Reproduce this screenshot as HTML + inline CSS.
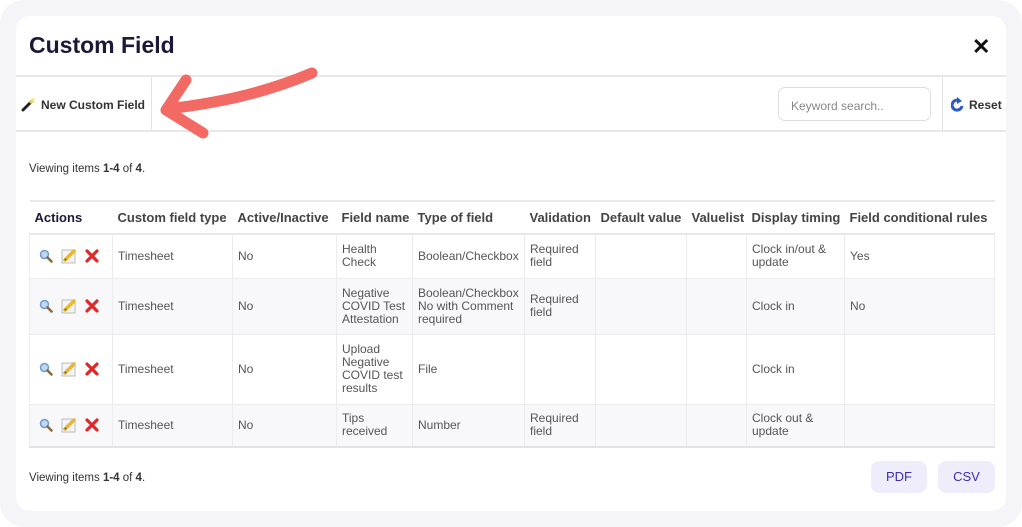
<!DOCTYPE html>
<html><head><meta charset="utf-8"><style>
*{box-sizing:border-box;margin:0;padding:0}
body{width:1022px;height:527px;background:#fff;font-family:"Liberation Sans",sans-serif;overflow:hidden;position:relative}
.outer{position:absolute;left:0;top:0;width:1022px;height:527px;background:#f5f5f9;border-radius:24px}
.card{position:absolute;left:16px;top:16px;width:990px;height:495px;background:#fff;border-radius:14px;overflow:hidden}
h1{position:absolute;left:13px;top:16px;font-size:23px;font-weight:bold;color:#1c1838}
.close{position:absolute;left:956px;top:18px;font-size:22px;font-weight:bold;color:#111}
.bar{position:absolute;left:0;top:59px;width:990px;height:57px;border-top:2px solid #e8e8ec;border-bottom:2px solid #e8e8ec}
.ncf{position:absolute;left:5px;top:20px;font-size:12px;font-weight:bold;color:#333;display:flex;align-items:center;gap:5px}
.v1{position:absolute;left:135px;top:0;height:53px;border-left:1px solid #e3e3e3}
.v2{position:absolute;left:926px;top:0;height:53px;border-left:1px solid #e3e3e3}
.search{position:absolute;left:762px;top:10px;width:153px;height:34px;border:1px solid #ddd;border-radius:7px;font-size:12px;color:#888;padding:11px 12px}
.reset{position:absolute;left:935px;top:20px;font-size:12px;font-weight:bold;color:#333;display:flex;align-items:center;gap:4px}
.view{position:absolute;left:13px;font-size:11.5px;color:#333}
table{position:absolute;left:13px;top:184px;border-collapse:collapse;font-size:12px;color:#555;border-top:2px solid #e8e8ec;border-bottom:2px solid #e3e3e6}
th{font-size:13px;color:#444;text-align:left;height:33px;padding:0 2px 0 5px;white-space:nowrap;border-bottom:2px solid #e8e8ec}
th:first-child{color:#1c1838}
td{border:1px solid #ececee;padding:0 5px;vertical-align:middle;line-height:13px}
td.a{padding-left:9px;white-space:nowrap}
tr.s td{background:#f8f8fb}
.btn{position:absolute;top:445px;height:32px;width:56px;background:#efedfb;border-radius:8px;color:#3a2fb0;font-size:13px;text-align:center;line-height:32px}
.ic{display:inline-block;vertical-align:middle;margin-right:8px}
</style></head><body>
<div class="outer"></div>
<div class="card">
<h1>Custom Field</h1>
<div class="close">✕</div>
<div class="bar">
<div class="ncf"><svg width="15" height="15" viewBox="0 0 15 15"><path d="M2 13 L11 4" stroke="#222" stroke-width="3" stroke-linecap="round"/><path d="M10 5 L12 3" stroke="#f0d050" stroke-width="3" stroke-linecap="round"/><circle cx="12" cy="2.5" r="1.5" fill="#ffe680"/></svg>New Custom Field</div>
<div class="v1"></div>
<div class="search">Keyword search..</div>
<div class="v2"></div>
<div class="reset"><svg width="14" height="15" viewBox="0 0 14 15"><path d="M11 9 A5 5 0 1 1 8 3.5" stroke="#2a5bc8" stroke-width="3" fill="none"/><path d="M6 0 L11 4 L6 7 Z" fill="#2a5bc8"/></svg>Reset</div>
</div>
<div class="view" style="top:147px">Viewing items <b>1-4</b> of <b>4</b>.</div>
<table>
<tr><th style="width:82px">Actions</th><th style="width:120px">Custom field type</th><th style="width:104px">Active/Inactive</th><th style="width:76px">Field name</th><th style="width:112px">Type of field</th><th style="width:71px">Validation</th><th style="width:91px">Default value</th><th style="width:60px">Valuelist</th><th style="width:98px">Display timing</th><th style="width:150px">Field conditional rules</th></tr>
<tr style="height:44px"><td class="a">ICONS</td><td>Timesheet</td><td>No</td><td>Health<br>Check</td><td>Boolean/Checkbox</td><td>Required<br>field</td><td></td><td></td><td>Clock in/out &amp;<br>update</td><td>Yes</td></tr>
<tr class="s" style="height:56px"><td class="a">ICONS</td><td>Timesheet</td><td>No</td><td>Negative<br>COVID Test<br>Attestation</td><td>Boolean/Checkbox<br>No with Comment<br>required</td><td>Required<br>field</td><td></td><td></td><td>Clock in</td><td>No</td></tr>
<tr style="height:70px"><td class="a">ICONS</td><td>Timesheet</td><td>No</td><td>Upload<br>Negative<br>COVID test<br>results</td><td>File</td><td></td><td></td><td></td><td>Clock in</td><td></td></tr>
<tr class="s" style="height:43px"><td class="a">ICONS</td><td>Timesheet</td><td>No</td><td>Tips<br>received</td><td>Number</td><td>Required<br>field</td><td></td><td></td><td>Clock out &amp;<br>update</td><td></td></tr>
</table>
<div class="view" style="top:456px">Viewing items <b>1-4</b> of <b>4</b>.</div>
<div class="btn" style="left:855px">PDF</div>
<div class="btn" style="left:922px;width:57px">CSV</div>
</div>
<svg style="position:absolute;left:0;top:0" width="400" height="160"><path d="M312 73 C260 95 215 103 168 109" stroke="#f26a63" stroke-width="11" fill="none" stroke-linecap="round"/><path d="M186 80 L166 110 L203 133" stroke="#f26a63" stroke-width="11" fill="none" stroke-linecap="round" stroke-linejoin="round"/></svg>
<script>
var ic='<svg class="ic" width="14" height="14" viewBox="0 0 14 14"><circle cx="5.5" cy="5.5" r="4" fill="#bcd8f2" stroke="#6f9ccc" stroke-width="1.5"/><path d="M8.5 8.5 L12.5 12.5" stroke="#8a6a3a" stroke-width="2.5" stroke-linecap="round"/></svg><svg class="ic" width="16" height="16" viewBox="0 0 16 16"><rect x="1" y="2" width="13" height="13" fill="#f4f4f4" stroke="#bbb"/><path d="M4 12 L13 3" stroke="#e8b830" stroke-width="3.5" stroke-linecap="round"/><path d="M4 12 L5 11" stroke="#555" stroke-width="2"/></svg><svg class="ic" width="14" height="14" viewBox="0 0 14 14"><path d="M2 2 L12 12 M12 2 L2 12" stroke="#e02828" stroke-width="3.2" stroke-linecap="round"/></svg>';
document.querySelectorAll('td').forEach(function(t){if(t.textContent=='ICONS'){t.innerHTML=ic;}});
</script>
</body></html>
